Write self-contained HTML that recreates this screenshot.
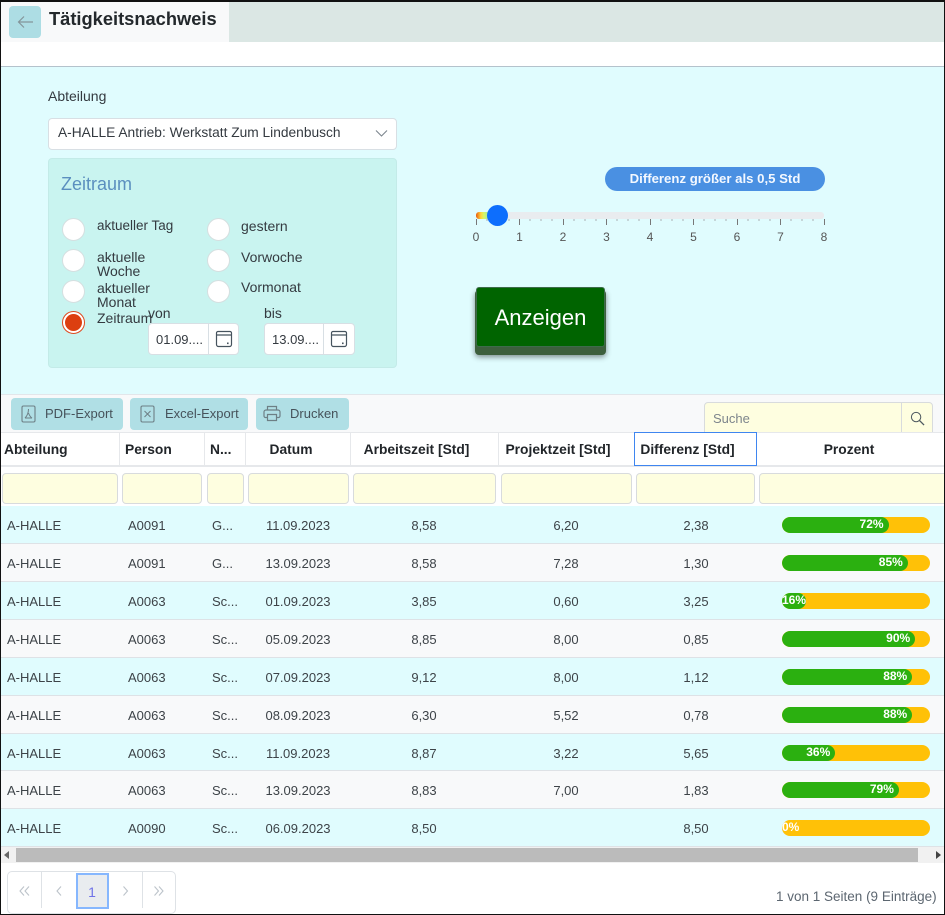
<!DOCTYPE html>
<html lang="de"><head><meta charset="utf-8"><title>Tätigkeitsnachweis</title>
<style>
*{box-sizing:border-box}
html,body{margin:0;padding:0}
body{width:945px;height:915px;position:relative;overflow:hidden;background:#fff;font-family:"Liberation Sans",sans-serif;font-size:14px;color:#343a40}
div,span,svg{position:absolute}
.t{line-height:16px;white-space:nowrap}
.c{transform:translateX(-50%)}
.radio{width:23px;height:23px;border-radius:50%;background:#fff;border:1px solid #d5dfe0}
.btn{top:398px;height:32px;background:#b0dfe5;border-radius:4px}
.hd{top:442px;font-weight:bold;font-size:13.8px;color:#212529}
.sep{top:432px;width:1px;height:34px;background:#e6e8eb}
.fi{top:473px;height:31px;background:#fefee0;border:1px solid #d8dbdd;border-radius:4px}
.row{left:1px;width:943px;height:38px;border-bottom:1px solid #dee2e6}
.a{background:#e0fcfe}.b{background:#f8f9fa}
.row span{top:12px;line-height:16px;white-space:nowrap;font-size:13px;color:#3d4348}
.s1{left:6px}.s2{left:127px}.s3{left:211px}
.s4{left:297px;transform:translateX(-50%)}.s5{left:423px;transform:translateX(-50%)}
.s6{left:565px;transform:translateX(-50%)}.s7{left:695px;transform:translateX(-50%)}
.bar{left:781px;top:11px;width:148px;height:16px;border-radius:8px;background:#ffc107;overflow:hidden}
.fill{left:0;top:0;height:16px;background:#2bb010;border-radius:8px;color:#fff;font-weight:bold;font-size:12px;line-height:15px;text-align:right;padding-right:5px;white-space:nowrap}
.tick{top:219px;width:1px;background:#777}
.lab{top:230px;font-size:12px;line-height:14px;color:#555;transform:translateX(-50%)}
</style></head><body>

<!-- top header -->
<div style="left:229px;top:2px;width:716px;height:40px;background:#dbe7e4"></div>
<div style="left:1px;top:2px;width:228px;height:40px;background:#f8f9fa"></div>
<div style="left:9px;top:6px;width:32px;height:32px;background:#addde4;border-radius:4px"></div>
<svg style="left:17px;top:14px" width="18" height="16" viewBox="0 0 18 16"><path d="M16 8H1.5M7 2.5 1.5 8 7 13.5" fill="none" stroke="#84959a" stroke-width="1.2"/></svg>
<div class="t" style="left:49px;top:9px;font-size:18.3px;line-height:20px;font-weight:bold;color:#23282c;">Tätigkeitsnachweis</div>

<!-- panel -->
<div style="left:1px;top:66px;width:944px;height:328px;background:#e0fcfe;border-top:1px solid #b4c2cc"></div>
<div class="t" style="left:48px;top:88px;">Abteilung</div>
<div style="left:48px;top:118px;width:349px;height:32px;background:#fff;border:1px solid #d8dfe4;border-radius:4px"></div>
<div class="t" style="left:58px;top:125px;font-size:13.75px">A-HALLE Antrieb: Werkstatt Zum Lindenbusch</div>
<svg style="left:375px;top:129px" width="13" height="9" viewBox="0 0 13 9"><path d="M1 1.5 6.5 7 12 1.5" fill="none" stroke="#7c868d" stroke-width="1.1"/></svg>

<div style="left:48px;top:158px;width:349px;height:210px;background:#c9f4f0;border-radius:4px;border:1px solid #c3ebe8"></div>
<div class="t" style="left:61px;top:174px;font-size:18px;line-height:20px;color:#5b8fbf">Zeitraum</div>

<div class="radio" style="left:62px;top:218px"></div>
<div class="radio" style="left:62px;top:249px"></div>
<div class="radio" style="left:62px;top:280px"></div>
<div class="radio" style="left:62px;top:311px;border:1px solid #de4a20;background:#fff"></div>
<div style="left:65px;top:314px;width:17px;height:17px;border-radius:50%;background:#dc3f10"></div>
<div class="radio" style="left:207px;top:218px"></div>
<div class="radio" style="left:207px;top:249px"></div>
<div class="radio" style="left:207px;top:280px"></div>

<div class="t" style="left:97px;top:218px;font-size:13.5px">aktueller Tag</div>
<div class="t" style="left:97px;top:250px;line-height:14px">aktuelle<br>Woche</div>
<div class="t" style="left:97px;top:281px;line-height:14px">aktueller<br>Monat</div>
<div class="t" style="left:97px;top:310px">Zeitraum</div>
<div class="t" style="left:241px;top:218px">gestern</div>
<div class="t" style="left:241px;top:249px">Vorwoche</div>
<div class="t" style="left:241px;top:279px">Vormonat</div>

<div class="t" style="left:148px;top:305px">von</div>
<div class="t" style="left:264px;top:305px">bis</div>
<div style="left:148px;top:323px;width:91px;height:32px;background:#fff;border:1px solid #d8dfe4;border-radius:4px"></div>
<div style="left:208px;top:324px;width:1px;height:30px;background:#d8dfe4"></div>
<div style="left:264px;top:323px;width:91px;height:32px;background:#fff;border:1px solid #d8dfe4;border-radius:4px"></div>
<div style="left:323px;top:324px;width:1px;height:30px;background:#d8dfe4"></div>
<div class="t" style="left:156px;top:332px;font-size:13px">01.09....</div>
<div class="t" style="left:272px;top:332px;font-size:13px">13.09....</div>
<svg style="left:215px;top:330px" width="18" height="18" viewBox="0 0 18 18"><path d="M3 1.5h12a1.5 1.5 0 0 1 1.5 1.5v11.5a2 2 0 0 1-2 2h-11a2 2 0 0 1-2-2V3A1.5 1.5 0 0 1 3 1.5ZM1.5 5h15" fill="none" stroke="#46535e" stroke-width="1.2"/><rect x="12" y="12.5" width="1.6" height="1.6" fill="#46535e"/></svg>
<svg style="left:330px;top:330px" width="18" height="18" viewBox="0 0 18 18"><path d="M3 1.5h12a1.5 1.5 0 0 1 1.5 1.5v11.5a2 2 0 0 1-2 2h-11a2 2 0 0 1-2-2V3A1.5 1.5 0 0 1 3 1.5ZM1.5 5h15" fill="none" stroke="#46535e" stroke-width="1.2"/><rect x="12" y="12.5" width="1.6" height="1.6" fill="#46535e"/></svg>

<!-- slider -->
<div style="left:605px;top:167px;width:220px;height:24px;border-radius:12px;background:#4a90e2;color:#f3f8ff;font-weight:bold;font-size:13.2px;line-height:24px;text-align:center">Differenz größer als 0,5 Std</div>
<div style="left:476px;top:212px;width:348px;height:7px;border-radius:3px;background:#e9ecef"></div>
<div style="left:476px;top:212px;width:16px;height:7px;border-radius:3px 0 0 3px;background:linear-gradient(90deg,#e8590c 0,#ffd43b 30%,#d4f76a 50%,#70e0d0 100%)"></div>
<div class="tick" style="left:476px;height:6px"></div><div class="tick" style="left:519px;height:6px"></div><div class="tick" style="left:563px;height:6px"></div><div class="tick" style="left:606px;height:6px"></div><div class="tick" style="left:650px;height:6px"></div><div class="tick" style="left:693px;height:6px"></div><div class="tick" style="left:737px;height:6px"></div><div class="tick" style="left:780px;height:6px"></div><div class="tick" style="left:824px;height:6px"></div>
<svg style="left:476px;top:219px" width="349" height="3"><path d="M11 0v2M22 0v2M33 0v2M54 0v2M65 0v2M76 0v2M98 0v2M109 0v2M120 0v2M141 0v2M152 0v2M163 0v2M185 0v2M196 0v2M207 0v2M228 0v2M239 0v2M250 0v2M272 0v2M283 0v2M294 0v2M315 0v2M326 0v2M337 0v2" stroke="#aab0b4" stroke-width="1"/></svg>
<div style="left:487px;top:205px;width:21px;height:21px;border-radius:50%;background:#0d6efd"></div>
<div class="lab" style="left:476px">0</div><div class="lab" style="left:519.5px">1</div><div class="lab" style="left:563px">2</div><div class="lab" style="left:606.5px">3</div><div class="lab" style="left:650px">4</div><div class="lab" style="left:693.5px">5</div><div class="lab" style="left:737px">6</div><div class="lab" style="left:780.5px">7</div><div class="lab" style="left:824px">8</div>

<!-- button -->
<div style="left:475px;top:290px;width:131px;height:65px;background:#3d5f3d;border-radius:4px;box-shadow:0 2px 6px rgba(0,0,0,.45)"></div>
<div style="left:476px;top:287px;width:129px;height:60px;background:#006400;border:1px solid #3d6b4a;border-radius:3px;color:#fff;font-size:22px;line-height:60px;text-align:center">Anzeigen</div>

<!-- toolbar -->
<div style="left:1px;top:394px;width:943px;height:38px;background:#f8f9fa;border-top:1px solid #e2e6ea"></div>
<div class="btn" style="left:11px;width:112px"></div>
<div class="btn" style="left:130px;width:118px"></div>
<div class="btn" style="left:256px;width:93px"></div>
<svg style="left:21px;top:405px" width="15" height="18" viewBox="0 0 15 18"><rect x="1" y="1" width="13" height="16" rx="1.5" fill="none" stroke="#6d7f85" stroke-width="1.1"/><path d="M7.5 4c0 4-1.5 7-3.5 9M7.5 8c1 3 2 4 3.5 5M4 13h7" fill="none" stroke="#6d7f85" stroke-width="1"/></svg>
<svg style="left:140px;top:405px" width="15" height="18" viewBox="0 0 15 18"><rect x="1" y="1" width="13" height="16" rx="1.5" fill="none" stroke="#6d7f85" stroke-width="1.1"/><path d="M4.5 6l6 6M10.5 6l-6 6" fill="none" stroke="#6d7f85" stroke-width="1"/></svg>
<svg style="left:263px;top:405px" width="18" height="17" viewBox="0 0 18 17"><path d="M4.5 5V1.5h9V5M4.5 12.5H2.5a1.5 1.5 0 0 1-1.5-1.5V7a2 2 0 0 1 2-2h12a2 2 0 0 1 2 2v4a1.5 1.5 0 0 1-1.5 1.5h-2M4.5 9.5h9v6h-9z" fill="none" stroke="#6d7f85" stroke-width="1.2"/></svg>
<div class="t" style="left:45px;top:406px;color:#46525a;font-size:13px">PDF-Export</div>
<div class="t" style="left:165px;top:406px;color:#46525a;font-size:13px">Excel-Export</div>
<div class="t" style="left:290px;top:406px;color:#46525a;font-size:13px">Drucken</div>

<div style="left:704px;top:402px;width:229px;height:31px;background:#fefee0;border:1px solid #d8dbdd;border-radius:4px 4px 0 0"></div>
<div style="left:901px;top:403px;width:1px;height:29px;background:#d8dbdd"></div>
<div class="t" style="left:713px;top:411px;color:#7d858c;font-size:13px">Suche</div>
<svg style="left:910px;top:411px" width="15" height="15" viewBox="0 0 16 16"><circle cx="6.5" cy="6.5" r="5" fill="none" stroke="#4f5a60" stroke-width="1.1"/><path d="M10.2 10.2 15 15" stroke="#4f5a60" stroke-width="1.4"/></svg>

<!-- table header -->
<div style="left:1px;top:432px;width:943px;height:35px;background:#fff;border-top:1px solid #e6e8eb;border-bottom:2px solid #e6e8eb"></div>
<div class="sep" style="left:119px"></div><div class="sep" style="left:204px"></div><div class="sep" style="left:245px"></div><div class="sep" style="left:350px"></div><div class="sep" style="left:498px"></div>
<div style="left:634px;top:432px;width:123px;height:34px;border:1px solid #3f86f0;background:#fff"></div>
<div class="t hd" style="left:4px">Abteilung</div>
<div class="t hd" style="left:125px">Person</div>
<div class="t hd" style="left:210px">N...</div>
<div class="t hd c" style="left:291px">Datum</div>
<div class="t hd c" style="left:416.5px">Arbeitszeit [Std]</div>
<div class="t hd c" style="left:558px">Projektzeit [Std]</div>
<div class="t hd c" style="left:687.5px">Differenz [Std]</div>
<div class="t hd c" style="left:849px">Prozent</div>

<!-- filter -->
<div class="fi" style="left:2px;width:116px"></div>
<div class="fi" style="left:122px;width:80px"></div>
<div class="fi" style="left:207px;width:37px"></div>
<div class="fi" style="left:248px;width:101px"></div>
<div class="fi" style="left:353px;width:143px"></div>
<div class="fi" style="left:501px;width:131px"></div>
<div class="fi" style="left:636px;width:119px"></div>
<div class="fi" style="left:759px;width:190px"></div>

<!-- rows -->
<div class="row a" style="top:506px"><span class="s1">A-HALLE</span><span class="s2">A0091</span><span class="s3">G...</span><span class="s4">11.09.2023</span><span class="s5">8,58</span><span class="s6">6,20</span><span class="s7">2,38</span><div class="bar"><div class="fill" style="width:72%">72%</div></div></div>
<div class="row b" style="top:544px"><span class="s1">A-HALLE</span><span class="s2">A0091</span><span class="s3">G...</span><span class="s4">13.09.2023</span><span class="s5">8,58</span><span class="s6">7,28</span><span class="s7">1,30</span><div class="bar"><div class="fill" style="width:85%">85%</div></div></div>
<div class="row a" style="top:582px"><span class="s1">A-HALLE</span><span class="s2">A0063</span><span class="s3">Sc...</span><span class="s4">01.09.2023</span><span class="s5">3,85</span><span class="s6">0,60</span><span class="s7">3,25</span><div class="bar"><div class="fill" style="width:16%;padding-right:1px">16%</div></div></div>
<div class="row b" style="top:620px"><span class="s1">A-HALLE</span><span class="s2">A0063</span><span class="s3">Sc...</span><span class="s4">05.09.2023</span><span class="s5">8,85</span><span class="s6">8,00</span><span class="s7">0,85</span><div class="bar"><div class="fill" style="width:90%">90%</div></div></div>
<div class="row a" style="top:658px"><span class="s1">A-HALLE</span><span class="s2">A0063</span><span class="s3">Sc...</span><span class="s4">07.09.2023</span><span class="s5">9,12</span><span class="s6">8,00</span><span class="s7">1,12</span><div class="bar"><div class="fill" style="width:88%">88%</div></div></div>
<div class="row b" style="top:696px"><span class="s1">A-HALLE</span><span class="s2">A0063</span><span class="s3">Sc...</span><span class="s4">08.09.2023</span><span class="s5">6,30</span><span class="s6">5,52</span><span class="s7">0,78</span><div class="bar"><div class="fill" style="width:88%">88%</div></div></div>
<div class="row a" style="top:734px;height:37px"><span class="s1">A-HALLE</span><span class="s2">A0063</span><span class="s3">Sc...</span><span class="s4">11.09.2023</span><span class="s5">8,87</span><span class="s6">3,22</span><span class="s7">5,65</span><div class="bar"><div class="fill" style="width:36%">36%</div></div></div>
<div class="row b" style="top:771px"><span class="s1">A-HALLE</span><span class="s2">A0063</span><span class="s3">Sc...</span><span class="s4">13.09.2023</span><span class="s5">8,83</span><span class="s6">7,00</span><span class="s7">1,83</span><div class="bar"><div class="fill" style="width:79%">79%</div></div></div>
<div class="row a" style="top:809px"><span class="s1">A-HALLE</span><span class="s2">A0090</span><span class="s3">Sc...</span><span class="s4">06.09.2023</span><span class="s5">8,50</span><span class="s7">8,50</span><div class="bar"><div style="left:0;top:0;color:#fff;font-weight:bold;font-size:12px;line-height:15px">0%</div></div></div>

<!-- scrollbar -->
<div style="left:1px;top:847px;width:943px;height:16px;background:#f1f1f1"></div>
<div style="left:16px;top:848px;width:902px;height:14px;background:#bbb"></div>
<svg style="left:4px;top:851px" width="6" height="8"><path d="M5 0v8L0 4z" fill="#666"/></svg>
<svg style="left:935px;top:851px" width="6" height="8"><path d="M1 0v8l5-4z" fill="#444"/></svg>

<!-- pagination -->
<div style="left:7px;top:871px;width:169px;height:43px;border:1px solid #dee2e6;border-radius:5px;background:#fff"></div>
<div style="left:41px;top:872px;width:1px;height:36px;background:#dee2e6"></div>
<div style="left:142px;top:872px;width:1px;height:36px;background:#dee2e6"></div>
<div style="left:76px;top:873px;width:33px;height:36px;background:#e9ecef;border:2px solid #86b7fe"></div>
<svg style="left:18px;top:886px" width="130" height="10" viewBox="0 0 130 10" fill="none" stroke="#bcc3ca" stroke-width="1.1"><path d="M6 .5 2 5l4 4.500M11 .5 7 5l4 4.500M43 .5 39 5l4 4.500M105.500 .5l4 4.500-4 4.500"/></svg>
<svg style="left:154px;top:886px" width="10" height="10" viewBox="0 0 10 10" fill="none" stroke="#bcc3ca" stroke-width="1.1"><path d="M.5 .5 4.500 5 .5 9.500M5 .5 9 5 5 9.500"/></svg>
<div class="t c" style="left:92px;top:884px;font-size:14px;color:#6f72e8">1</div>
<div class="t" style="left:776px;top:889px;color:#5c6670;font-size:13.5px">1 von 1 Seiten (9 Einträge)</div>

<!-- outer frame -->
<div style="left:0;top:0;width:945px;height:915px;border:1px solid #111;border-top-width:2px;pointer-events:none"></div>
</body></html>
